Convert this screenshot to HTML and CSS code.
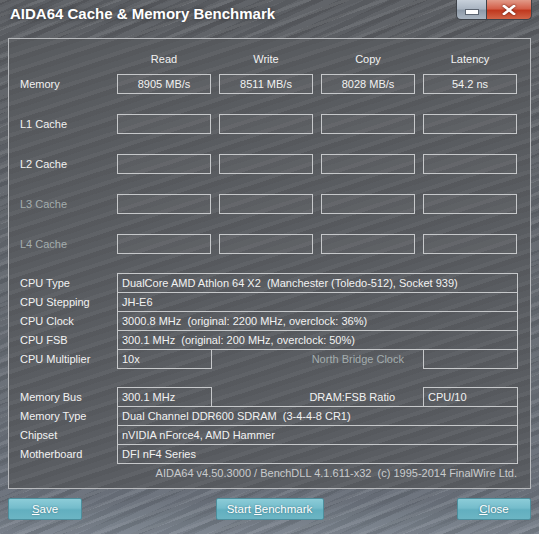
FILE: index.html
```html
<!DOCTYPE html>
<html>
<head>
<meta charset="utf-8">
<title>AIDA64 Cache &amp; Memory Benchmark</title>
<link rel="stylesheet" href="styles.css">
</head>
<body>
<div class="window">
  <div class="titlebar">
    <span class="title">AIDA64 Cache &amp; Memory Benchmark</span>
    <div class="controls">
      <span class="btn-min"><i></i></span>
      <span class="btn-close">
        <svg width="14" height="10" viewBox="0 0 14 10"><path d="M2 1 L12 9 M12 1 L2 9" stroke="#fff" stroke-width="2.6" stroke-linecap="square"/></svg>
      </span>
    </div>
  </div>
  <div class="panel">
    <div class="bench-head">
      <div></div>
      <div class="hdr">Read</div>
      <div class="hdr">Write</div>
      <div class="hdr">Copy</div>
      <div class="hdr">Latency</div>
    </div>
    <div class="bench">
      <div class="lbl">Memory</div>
      <div class="box">8905 MB/s</div>
      <div class="box">8511 MB/s</div>
      <div class="box">8028 MB/s</div>
      <div class="box">54.2 ns</div>

      <div class="lbl">L1 Cache</div>
      <div class="box"></div><div class="box"></div><div class="box"></div><div class="box"></div>

      <div class="lbl">L2 Cache</div>
      <div class="box"></div><div class="box"></div><div class="box"></div><div class="box"></div>

      <div class="lbl dim">L3 Cache</div>
      <div class="box"></div><div class="box"></div><div class="box"></div><div class="box"></div>

      <div class="lbl dim">L4 Cache</div>
      <div class="box"></div><div class="box"></div><div class="box"></div><div class="box"></div>
    </div>

    <div class="info">
      <div class="row"><div class="lbl">CPU Type</div><div class="val wide">DualCore AMD Athlon 64 X2&nbsp; (Manchester (Toledo-512), Socket 939)</div></div>
      <div class="row"><div class="lbl">CPU Stepping</div><div class="val wide">JH-E6</div></div>
      <div class="row"><div class="lbl">CPU Clock</div><div class="val wide">3000.8 MHz&nbsp; (original: 2200 MHz, overclock: 36%)</div></div>
      <div class="row"><div class="lbl">CPU FSB</div><div class="val wide">300.1 MHz&nbsp; (original: 200 MHz, overclock: 50%)</div></div>
      <div class="row"><div class="lbl">CPU Multiplier</div><div class="val short">10x</div><div class="mid dim nb">North Bridge Clock</div><div class="val short"></div></div>
    </div>

    <div class="info mem">
      <div class="row"><div class="lbl">Memory Bus</div><div class="val short">300.1 MHz</div><div class="mid dram">DRAM:FSB Ratio</div><div class="val short">CPU/10</div></div>
      <div class="row"><div class="lbl">Memory Type</div><div class="val wide">Dual Channel DDR600 SDRAM&nbsp; (3-4-4-8 CR1)</div></div>
      <div class="row"><div class="lbl">Chipset</div><div class="val wide">nVIDIA nForce4, AMD Hammer</div></div>
      <div class="row"><div class="lbl">Motherboard</div><div class="val wide">DFI nF4 Series</div></div>
    </div>

    <div class="footer">AIDA64 v4.50.3000 / BenchDLL 4.1.611-x32&nbsp; (c) 1995-2014 FinalWire Ltd.</div>
  </div>
  <div class="buttons">
    <button class="btn save"><u>S</u>ave</button>
    <button class="btn start">Start <u>B</u>enchmark</button>
    <button class="btn close"><u>C</u>lose</button>
  </div>
</div>
</body>
</html>
```
FILE: styles.css
```css
* { box-sizing: border-box; }
html, body { margin: 0; padding: 0; }
body {
  width: 539px;
  height: 534px;
  overflow: hidden;
  font-family: "Liberation Sans", Arial, sans-serif;
  font-size: 11px;
  color: #f2f2f2;
}
.window {
  position: relative;
  width: 539px;
  height: 534px;
  background-color: #636a73;
  background-image:
    repeating-linear-gradient(160deg, rgba(255,255,255,0.06) 0 3px, rgba(0,0,0,0.05) 3px 7px, rgba(255,255,255,0) 7px 13px),
    repeating-linear-gradient(155deg, rgba(0,0,0,0.05) 0 5px, rgba(255,255,255,0.03) 5px 11px),
    linear-gradient(180deg, #5c5f64 0, #5c5f64 38px, #6a717b 500px, #7a828d 534px);
  display: flex;
  flex-direction: column;
}
.titlebar {
  height: 38px;
  padding: 5px 0 0 10px;
}
.title {
  font-weight: bold;
  font-size: 15px;
  color: #ffffff;
  text-shadow: 0 0 4px rgba(0,0,0,0.5);
}
.controls {
  position: absolute;
  top: 0;
  left: 456px;
  display: flex;
}
.btn-min, .btn-close {
  height: 20px;
  display: flex;
  align-items: center;
  justify-content: center;
  border: 1px solid #3e4248;
  border-top: none;
}
.btn-min {
  width: 30px;
  border-bottom-left-radius: 5px;
  border-right: none;
  background: linear-gradient(180deg, #c7d0da 0, #aab5c2 45%, #8e9aa8 55%, #a9b4c0 100%);
}
.btn-min i {
  display: block;
  width: 12px;
  height: 4px;
  margin-top: 5px;
  background: #fff;
  border: 1px solid #5b6470;
  box-sizing: content-box;
}
.btn-close {
  width: 46px;
  border-bottom-right-radius: 5px;
  background: linear-gradient(180deg, #e29a88 0, #d3604a 45%, #c0391f 55%, #d06447 100%);
}
.btn-close svg { filter: drop-shadow(0 0 1px rgba(80,20,10,0.9)); }

.panel {
  margin-left: 8px;
  width: 523px;
  height: 451px;
  border: 1px solid #b7b9bc;
  padding-top: 12px;
  background-image:
    repeating-linear-gradient(162deg, rgba(255,255,255,0.04) 0 4px, rgba(0,0,0,0.04) 4px 9px, rgba(255,255,255,0) 9px 15px),
    linear-gradient(180deg, #595c60, #5a5d62);
}
.bench-head, .bench {
  display: grid;
  grid-template-columns: 100px repeat(4, 94px);
  column-gap: 8px;
}
.bench-head {
  height: 16px;
  line-height: 16px;
  margin-bottom: 7px;
}
.hdr { text-align: center; }
.bench {
  grid-auto-rows: 20px;
  row-gap: 20px;
}
.lbl {
  padding-left: 11px;
  line-height: 20px;
  white-space: nowrap;
}
.dim { color: #a4adae; }
.box {
  border: 1px solid #c6c8ca;
  background: rgba(255,255,255,0.03);
  text-align: center;
  line-height: 18px;
  height: 20px;
}
.info { margin-top: 19px; }
.info.mem { margin-top: 18px; }
.row {
  display: flex;
  height: 20px;
  margin-top: -1px;
}
.row:first-child { margin-top: 0; }
.row .lbl { width: 108px; line-height: 20px; }
.val {
  height: 20px;
  border: 1px solid #c6c8ca;
  line-height: 18px;
  padding-left: 4px;
  white-space: nowrap;
  overflow: hidden;
}
.val.wide { width: 401px; }
.val.short { width: 95px; }
.mid {
  width: 211px;
  text-align: right;
  line-height: 20px;
}
.mid.nb { padding-right: 19px; }
.mid.dram { padding-right: 28px; }
.footer {
  margin-top: 2px;
  text-align: right;
  padding-right: 13px;
  color: #c9cbcd;
  line-height: 14px;
}
.buttons {
  display: flex;
  justify-content: space-between;
  padding: 0 8px;
  margin-top: 9px;
}
.btn {
  height: 22px;
  border: 1px solid #4d8e9c;
  border-radius: 2px;
  background: linear-gradient(180deg, #8cccd8 0, #74bccb 45%, #62afbf 55%, #6cb5c4 100%);
  color: #ffffff;
  font-family: "Liberation Sans", Arial, sans-serif;
  font-size: 11.5px;
  padding: 0;
  text-shadow: 0 0 2px rgba(30,70,80,0.6);
}
.btn.save, .btn.close { width: 74px; }
.btn.start { width: 108px; }
```
